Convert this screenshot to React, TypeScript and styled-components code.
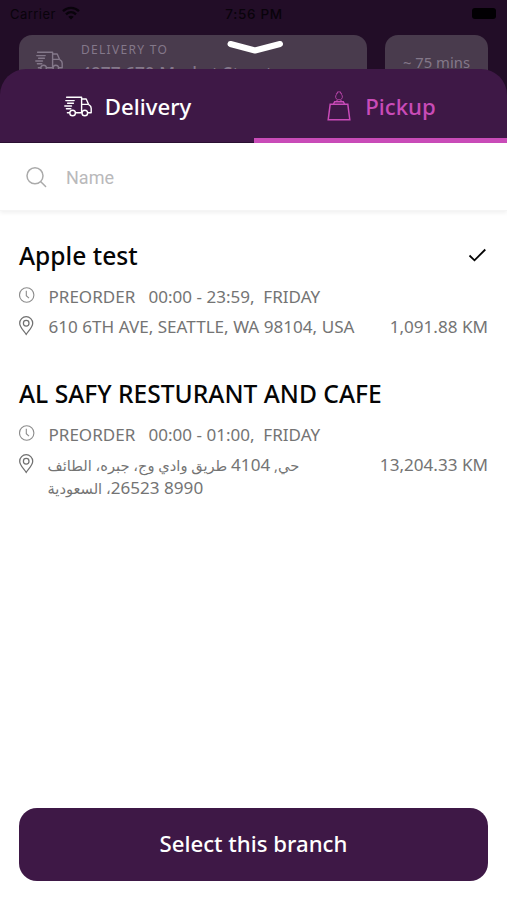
import React from "react";
import styled, { createGlobalStyle } from "styled-components";

const GlobalStyle = createGlobalStyle`
  *, *::before, *::after { box-sizing: border-box; }
  body { margin: 0; background: #fff; }
  button, input { font: inherit; }
`;

const Screen = styled.main`
  width: 507px;
  height: 900px;
  display: flex;
  flex-direction: column;
  overflow: hidden;
  background: #fff;
  font-family: "Noto Sans", "DejaVu Sans", sans-serif;
`;

const Backdrop = styled.header`
  position: relative;
  flex: none;
  height: 95px;
  background: #220d27;
`;

const StatusBar = styled.div`
  height: 35px;
  padding: 4px 9px 0 10px;
  display: grid;
  grid-template-columns: 1fr auto 1fr;
  font: 500 13.5px/20px Inter, sans-serif;
  color: #09030b;
`;

const Carrier = styled.div`
  display: flex;
  gap: 6px;
  font-size: 13px;
  font-weight: 400;
  letter-spacing: 0.45px;
  svg { margin-top: 2px; }
`;

const Clock = styled.div`
  letter-spacing: 0.65px;
`;

const Battery = styled.div`
  justify-self: end;
  width: 24px;
  height: 11px;
  margin: 4px 2px 0 0;
  border-radius: 3px;
  background: #020003;
`;

const Cards = styled.div`
  display: flex;
  gap: 18px;
  padding: 0 19px;
`;

const Card = styled.div<{ $grow?: boolean }>`
  flex: ${(p) => (p.$grow ? "1" : "0 0 103px")};
  height: 60px;
  display: flex;
  gap: 18px;
  overflow: hidden;
  border-radius: 13px;
  background: #493b4d;
  color: #84788a;
`;

const CardIcon = styled.div`
  padding: 16px 0 0 16px;
`;

const CardCopy = styled.div`
  padding-top: 6px;
  white-space: nowrap;
`;

const CardLabel = styled.div`
  font-size: 12px;
  line-height: 18px;
  letter-spacing: 1.3px;
`;

const CardAddress = styled.div`
  font-size: 17.3px;
  font-weight: 500;
  line-height: 30px;
`;

const Eta = styled.div`
  width: 100%;
  padding-top: 16px;
  text-align: center;
  font-size: 14.8px;
  line-height: 22px;
`;

const Handle = styled.svg`
  position: absolute;
  left: 226px;
  top: 39px;
`;

const Sheet = styled.section`
  position: relative;
  flex: 1;
  margin-top: -26px;
  display: flex;
  flex-direction: column;
`;

const Tabs = styled.nav`
  display: grid;
  grid-template-columns: 254px 253px;
  height: 74px;
  border-radius: 26px 26px 0 0;
  background: #3e1846;
`;

const Tab = styled.button<{ $active?: boolean }>`
  display: flex;
  align-items: center;
  justify-content: center;
  gap: ${(p) => (p.$active ? "14px" : "13px")};
  padding: ${(p) => (p.$active ? "5px 0 0 2px" : "1px 0 0 1px")};
  border: 0;
  border-bottom: ${(p) => (p.$active ? "5px solid #c94bb8" : "1px solid #2c1033")};
  background: none;
  color: ${(p) => (p.$active ? "#c94bb8" : "#fff")};
  font-size: 22.2px;
  font-weight: 500;
  line-height: 30px;
`;

const TabLabel = styled.span`
  padding-top: 2px;
`;

const Search = styled.label`
  display: flex;
  align-items: center;
  gap: 18px;
  height: 68px;
  padding: 2px 25px 0;
  border-bottom: 1px solid #f5f5f5;
  box-shadow: 0 2px 4px rgba(0, 0, 0, 0.06);
  color: #aaa;
`;

const SearchInput = styled.input`
  flex: 1;
  border: 0;
  padding: 0;
  outline: 0;
  background: none;
  font: 400 18px/24px Roboto, sans-serif;
  &::placeholder { color: #b9b9bb; opacity: 1; }
`;

const Branches = styled.div`
  flex: 1;
  padding: 28px 19px 0;
`;

const Branch = styled.article`
  height: 138px;
  color: #747474;
  font-size: 17.1px;
  line-height: 23px;
`;

const BranchHeader = styled.div`
  display: flex;
  justify-content: space-between;
  height: 46px;
  color: #050505;
`;

const BranchName = styled.h2`
  margin: 0;
  font-size: 24.6px;
  font-weight: 500;
  line-height: 34px;
  white-space: nowrap;
`;

const Detail = styled.div`
  display: grid;
  grid-template-columns: 29.5px 1fr auto;
  min-height: 30px;
  white-space: pre;
  svg { margin-top: 1px; }
`;

const Hours = styled.span`
  font-size: 17.05px;
`;

const ArabicAddress = styled.div`
  margin: 1px 0 0 -1px;
  text-align: left;
  font-size: 14.65px;
  line-height: 23px;
`;

const Figures = styled.span`
  font-size: 17.1px;
  line-height: 1;
`;

const Footer = styled.footer`
  padding: 0 19px 19px;
`;

const SelectButton = styled.button`
  width: 100%;
  height: 73px;
  border: 0;
  border-radius: 18px;
  background: #3e1846;
  color: #fff;
  font-size: 22.2px;
  font-weight: 500;
  padding: 0 0 2px;
`;

const Truck = () => (
  <svg width="28" height="21" viewBox="0 0 28 21" fill="none" stroke="currentColor" strokeWidth="1.4" strokeLinecap="round" strokeLinejoin="round">
    <path d="M2.6 1.3h15v15.4h-6M17.6 3h4.6l2.3 5.3c1.8 1.1 2.7 2.3 2.7 4v4.4h-3.5M17.6 8.4h6.9M1.8 4.6h8.4M3.6 7.3h5.8M.8 10h6.7M2.4 12.8h4.4M3.4 16.7h2" />
    <circle cx="8.6" cy="17" r="2.8" />
    <circle cx="20.8" cy="17" r="2.8" />
  </svg>
);

const Bag = () => (
  <svg width="24" height="32" viewBox="0 0 24 32" fill="none" stroke="currentColor" strokeWidth="1.5">
    <path d="M3.2 14.2h17.6l2 15.5H1.2z" />
    <path d="M6.5 14l1.2-2.3h8.6l1.2 2.3" />
    <path d="M8.8 11.5l1.8-1.7C8.4 8.8 8 6.1 9.4 4.6V3.3h1.1V1.9h3v1.4h1.1v1.3c1.4 1.5 1 4.2-1.2 5.2l1.8 1.7M10.5 10.6c.9-1.5 2.1-1.5 3 0" strokeWidth=".8" />
  </svg>
);

const WifiIcon = () => (
  <svg width="18" height="14" viewBox="0 0 18 14" fill="none" stroke="currentColor" strokeWidth="2.4">
    <path d="M1 5.1c4.7-4.3 11.3-4.3 16 0M4 8.3c3-2.7 7-2.7 10 0" />
    <path d="M6.3 10.8c1.6-1.4 3.8-1.4 5.4 0L9 13.5z" fill="currentColor" stroke="none" />
  </svg>
);

const SearchIcon = () => (
  <svg width="23" height="23" viewBox="0 0 23 23" fill="none" stroke="currentColor" strokeWidth="1.5" strokeLinecap="round">
    <circle cx="10" cy="9.8" r="8" />
    <path d="m15.8 15.7 4.8 4.8" />
  </svg>
);

const ClockIcon = () => (
  <svg width="16" height="18" viewBox="0 0 16 18" fill="none" stroke="#8c8c8c" strokeWidth="1.1">
    <circle cx="7.7" cy="9" r="7.2" />
    <path d="M7.3 4.7v5l2.7 2.4" />
  </svg>
);

const PinIcon = () => (
  <svg width="16" height="20" viewBox="0 0 16 20" fill="none" stroke="#707070" strokeWidth="1.25">
    <path d="M7.2 18.4C4.8 14.7.7 11.2.7 7.2a6.5 6.5 0 0 1 13 0c0 4-4.1 7.5-6.5 11.2Z" />
    <circle cx="7.2" cy="7.2" r="2.8" />
  </svg>
);

const CheckIcon = () => (
  <svg width="20" height="32" viewBox="0 0 20 32" fill="none" stroke="currentColor" strokeWidth="1.8">
    <path d="m1.5 16.5 5 4.8L17.3 10.5" />
  </svg>
);

export default function App() {
  return (
    <Screen>
      <GlobalStyle />
      <Backdrop>
        <StatusBar>
          <Carrier>Carrier <WifiIcon /></Carrier>
          <Clock>7:56 PM</Clock>
          <Battery />
        </StatusBar>
        <Cards>
          <Card $grow>
            <CardIcon><Truck /></CardIcon>
            <CardCopy>
              <CardLabel>DELIVERY TO</CardLabel>
              <CardAddress>4977 670 Market Street</CardAddress>
            </CardCopy>
          </Card>
          <Card><Eta>~ 75 mins</Eta></Card>
        </Cards>
        <Handle width="59" height="18" viewBox="0 0 59 18" fill="none" stroke="#fff" strokeWidth="6" strokeLinecap="round" strokeLinejoin="round">
          <path d="M4.5 5 29 11.5 54 5" />
        </Handle>
      </Backdrop>
      <Sheet>
        <Tabs>
          <Tab><Truck /><TabLabel>Delivery</TabLabel></Tab>
          <Tab $active><Bag /><TabLabel>Pickup</TabLabel></Tab>
        </Tabs>
        <Search>
          <SearchIcon />
          <SearchInput placeholder="Name" />
        </Search>
        <Branches>
          <Branch>
            <BranchHeader>
              <BranchName>Apple test</BranchName>
              <CheckIcon />
            </BranchHeader>
            <Detail><ClockIcon /><Hours>{"PREORDER   00:00 - 23:59,  FRIDAY"}</Hours></Detail>
            <Detail><PinIcon /><span>610 6TH AVE, SEATTLE, WA 98104, USA</span><span>1,091.88 KM</span></Detail>
          </Branch>
          <Branch>
            <BranchHeader>
              <BranchName>AL SAFY RESTURANT AND CAFE</BranchName>
            </BranchHeader>
            <Detail><ClockIcon /><Hours>{"PREORDER   00:00 - 01:00,  FRIDAY"}</Hours></Detail>
            <Detail>
              <PinIcon />
              <ArabicAddress dir="rtl" lang="ar">
                {"حي, "}<Figures>4104</Figures>{" طريق وادي وج، جبره، الطائف\n"}
                <Figures>8990 26523</Figures>{"، السعودية"}
              </ArabicAddress>
              <span>13,204.33 KM</span>
            </Detail>
          </Branch>
        </Branches>
        <Footer><SelectButton>Select this branch</SelectButton></Footer>
      </Sheet>
    </Screen>
  );
}
